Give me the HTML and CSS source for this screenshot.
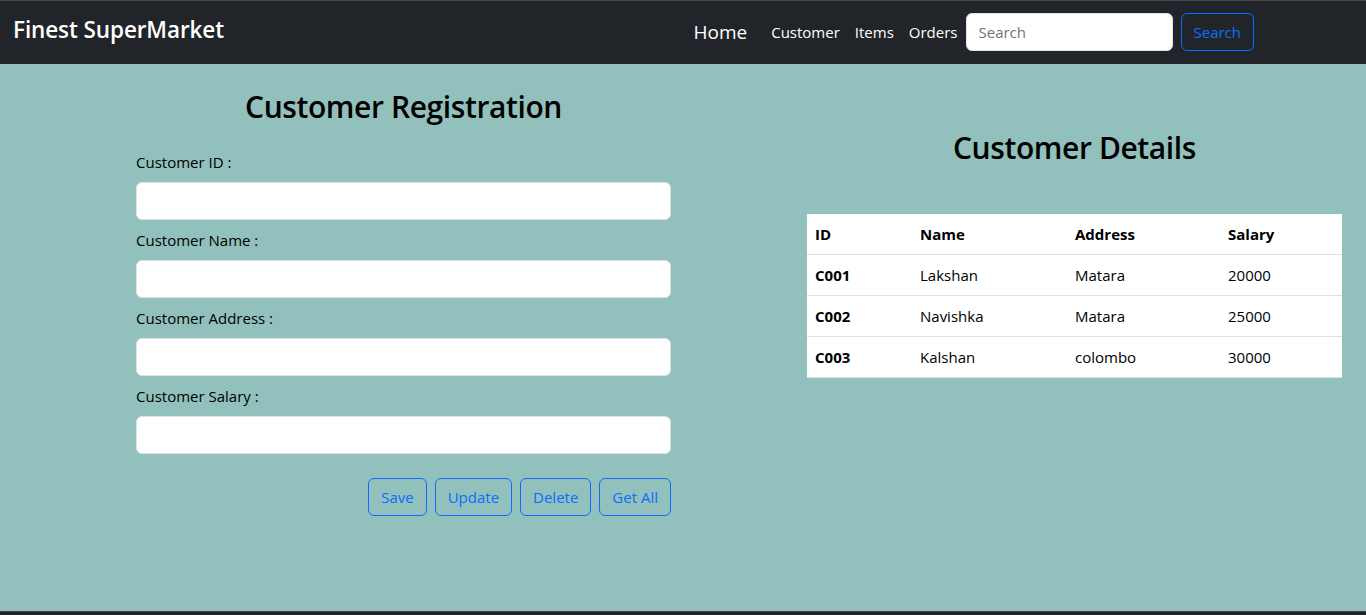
FILE: index.html
```html
<!DOCTYPE html>
<html lang="en">
<head>
<meta charset="utf-8">
<title>Finest SuperMarket</title>
<link rel="stylesheet" href="styles.css">
</head>
<body>
<nav class="navbar">
  <a class="brand" href="#">Finest SuperMarket</a>
  <div class="nav-right">
    <a class="nav-home" href="#">Home</a>
    <a class="nav-link first" href="#">Customer</a>
    <a class="nav-link" href="#">Items</a>
    <a class="nav-link" href="#">Orders</a>
    <form class="search-form">
      <input class="search-input" type="text" placeholder="Search">
      <button class="btn btn-outline" type="button">Search</button>
    </form>
  </div>
</nav>
<main class="main">
  <section class="reg">
    <h2 class="title">Customer Registration</h2>
    <div class="group">
      <label class="label">Customer ID :</label>
      <input class="field" type="text">
    </div>
    <div class="group">
      <label class="label">Customer Name :</label>
      <input class="field" type="text">
    </div>
    <div class="group">
      <label class="label">Customer Address :</label>
      <input class="field" type="text">
    </div>
    <div class="group">
      <label class="label">Customer Salary :</label>
      <input class="field" type="text">
    </div>
    <div class="actions">
      <button class="btn btn-outline" type="button">Save</button>
      <button class="btn btn-outline" type="button">Update</button>
      <button class="btn btn-outline" type="button">Delete</button>
      <button class="btn btn-outline" type="button">Get All</button>
    </div>
  </section>
  <section class="details">
    <h2 class="title title-details">Customer Details</h2>
    <table class="table">
      <colgroup>
        <col class="c-id"><col class="c-name"><col class="c-addr"><col class="c-sal">
      </colgroup>
      <thead>
        <tr><th>ID</th><th>Name</th><th>Address</th><th>Salary</th></tr>
      </thead>
      <tbody>
        <tr><th>C001</th><td>Lakshan</td><td>Matara</td><td>20000</td></tr>
        <tr><th>C002</th><td>Navishka</td><td>Matara</td><td>25000</td></tr>
        <tr><th>C003</th><td>Kalshan</td><td>colombo</td><td>30000</td></tr>
      </tbody>
    </table>
  </section>
</main>
<footer class="footer"></footer>
</body>
</html>
```

FILE: styles.css
```css
* { box-sizing: border-box; }
html, body { margin: 0; padding: 0; }
body {
  font-family: "Open Sans", "Noto Sans", sans-serif;
  font-size: 15px;
  line-height: 24px;
  color: #212529;
  background: #92c0bc;
  height: 615px;
  overflow: hidden;
  display: flex;
  flex-direction: column;
}
a { text-decoration: none; }

.navbar {
  height: 64px;
  background: #212529;
  border-top: 1px solid #45484b;
  display: flex;
  align-items: center;
  padding: 0 112px 2px 13px;
}
.brand {
  color: #fff;
  font-size: 22.5px;
  font-weight: 600;
  letter-spacing: -0.1px;
  margin-top: -4px;
}
.nav-right {
  margin-left: auto;
  display: flex;
  align-items: center;
}
.nav-home {
  color: #fff;
  font-size: 19px;
  margin-right: 24px;
}
.nav-link {
  color: #fff;
  font-size: 15px;
  margin-right: 15px;
}
.nav-link:last-of-type { margin-right: 8px; }
.search-form {
  display: flex;
  gap: 8px;
}
.search-input {
  width: 207px;
  height: 38px;
  border: 1px solid #dee2e6;
  border-radius: 6px;
  padding: 6px 12px;
  font: inherit;
  font-size: 15px;
  color: #212529;
}
.search-input::placeholder { color: #6c757d; }

.btn {
  height: 38px;
  padding: 6px 12px;
  border-radius: 6px;
  font: inherit;
  font-size: 15px;
  line-height: 24px;
  background: transparent;
  cursor: pointer;
}
.btn-outline {
  border: 1px solid #0d6efd;
  color: #0d6efd;
}

.main {
  flex: 1;
  display: flex;
  align-items: flex-start;
  padding-left: 136px;
  gap: 136px;
}
.reg, .details { width: 535px; }
.title {
  margin: 24px 0 24px;
  font-size: 30px;
  line-height: 38px;
  font-weight: 600;
  color: #000;
  text-align: center;
  letter-spacing: -0.4px;
}
.title-details { margin-top: 65px; margin-bottom: 47px; }
.group {
  display: flex;
  flex-direction: column;
  margin-bottom: 8px;
}
.label {
  color: #000;
  margin-bottom: 8px;
}
.field {
  height: 38px;
  border: 1px solid #dee2e6;
  border-radius: 6px;
  background: #fff;
  font: inherit;
  padding: 6px 12px;
}
.actions {
  display: flex;
  justify-content: flex-end;
  gap: 8px;
  margin-top: 24px;
}

.table {
  width: 535px;
  border-collapse: collapse;
  background: #fff;
  table-layout: fixed;
  color: #000;
}
.c-id { width: 105px; }
.c-name { width: 155px; }
.c-addr { width: 153px; }
.c-sal { width: 122px; }
.table th, .table td {
  text-align: left;
  padding: 8px;
  line-height: 24px;
  border-bottom: 1px solid #dee2e6;
}
.table th { font-weight: 700; }
.table td { font-weight: 400; }

.footer {
  background: #222;
  border-top: 1px solid #444;
  height: 4px;
}
```
